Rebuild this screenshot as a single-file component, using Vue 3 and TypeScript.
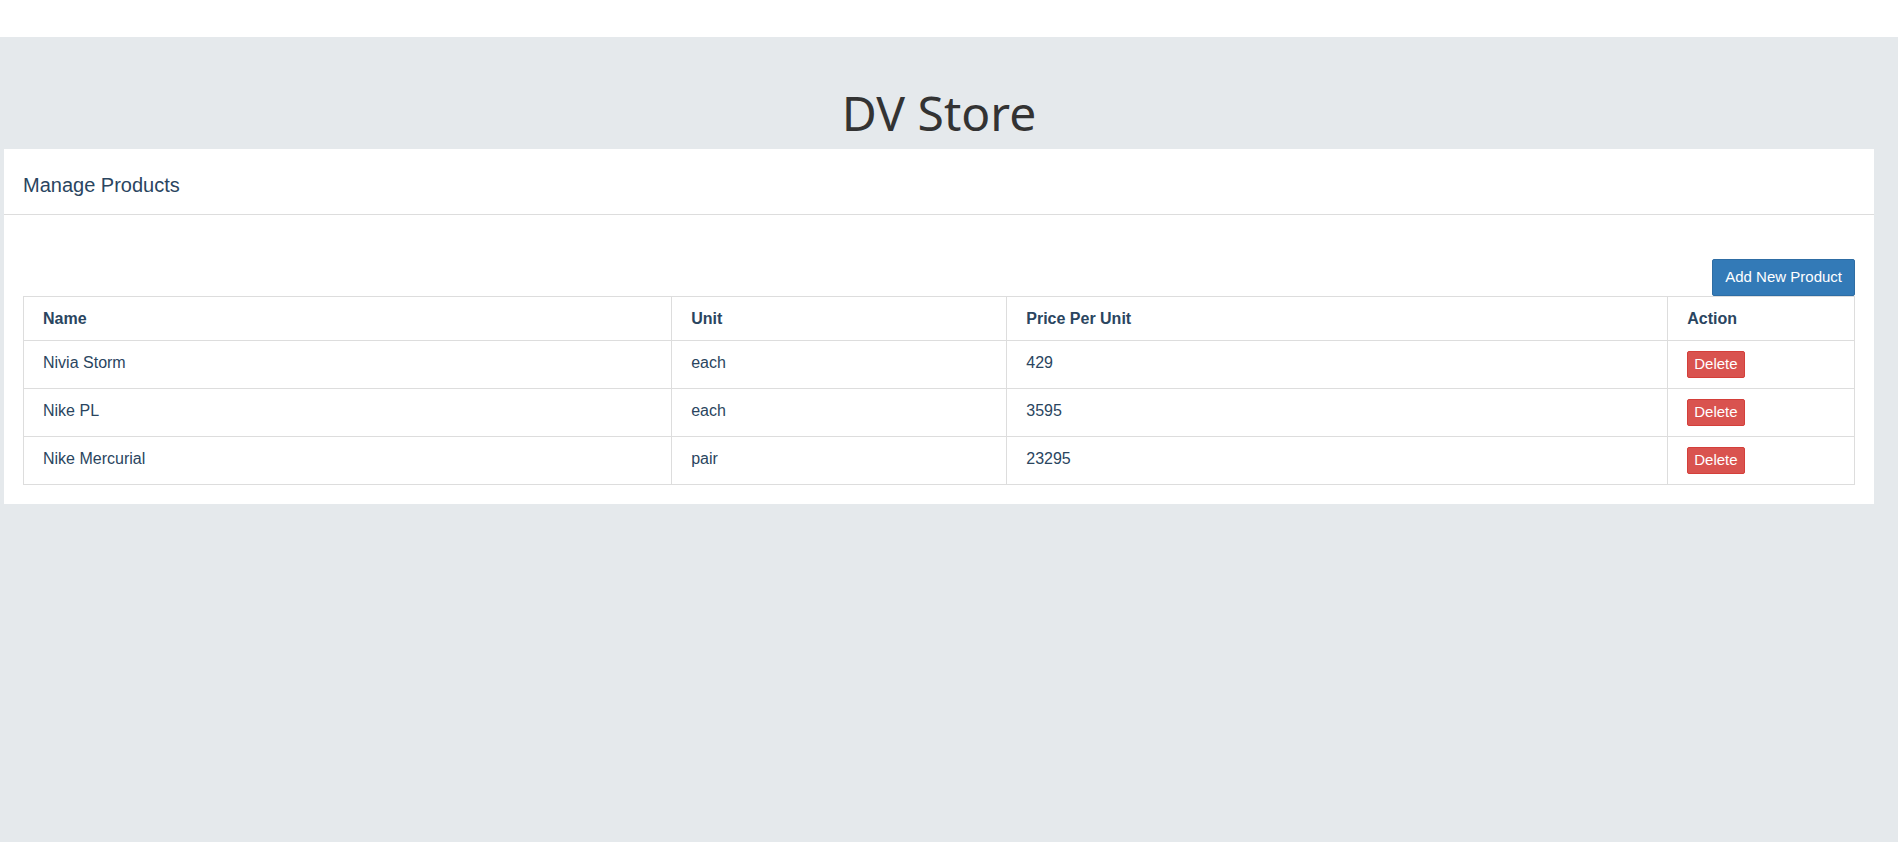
<script setup lang="ts">
import { ref } from 'vue'

interface Product {
  id: number
  name: string
  unit: string
  price: number
}

const products = ref<Product[]>([
  { id: 1, name: 'Nivia Storm', unit: 'each', price: 429 },
  { id: 2, name: 'Nike PL', unit: 'each', price: 3595 },
  { id: 3, name: 'Nike Mercurial', unit: 'pair', price: 23295 },
])

function removeProduct(id: number): void {
  products.value = products.value.filter((product) => product.id !== id)
}
</script>

<template>
  <div class="page">
    <header class="topbar"></header>
    <main class="content">
      <h1 class="title">DV Store</h1>
      <section class="panel" aria-labelledby="panel-title">
        <div class="panel-header">
          <h2 id="panel-title" class="panel-title">Manage Products</h2>
        </div>
        <div class="panel-body">
          <div class="actions">
            <button type="button" class="btn btn-primary">Add New Product</button>
          </div>
          <table class="products">
            <colgroup>
              <col class="col-name" />
              <col class="col-unit" />
              <col class="col-price" />
              <col />
            </colgroup>
            <thead>
              <tr>
                <th scope="col">Name</th>
                <th scope="col">Unit</th>
                <th scope="col">Price Per Unit</th>
                <th scope="col">Action</th>
              </tr>
            </thead>
            <tbody>
              <tr v-for="product in products" :key="product.id">
                <td>{{ product.name }}</td>
                <td>{{ product.unit }}</td>
                <td>{{ product.price }}</td>
                <td>
                  <button type="button" class="btn btn-danger" @click="removeProduct(product.id)">Delete</button>
                </td>
              </tr>
            </tbody>
          </table>
        </div>
      </section>
    </main>
  </div>
</template>

<style>
body {
  margin: 0;
  background: #e5e9ec;
}
</style>

<style scoped>
.page {
  min-height: 100vh;
  background: #e5e9ec;
  color: #2a4560;
  font-family: Arial, "Liberation Sans", sans-serif;
  font-size: 16px;
  line-height: 24px;
}

.topbar {
  height: 37px;
  background: #fff;
}

.content {
  padding: 50px 24px 20px 4px;
}

.title {
  margin: 0 0 10px;
  color: #333;
  font-family: "Comic Sans MS", "Noto Sans", sans-serif;
  font-size: 48px;
  font-weight: 400;
  line-height: 52px;
  text-align: center;
}

.panel {
  background: #fff;
}

.panel-header {
  padding: 24px 19px 17px;
  border-bottom: 1px solid #ddd;
}

.panel-title {
  margin: 0;
  font-size: 20px;
  font-weight: 400;
  line-height: 24px;
}

.panel-body {
  padding: 44px 19px 19px;
}

.actions {
  display: flex;
  justify-content: flex-end;
}

.btn {
  display: block;
  border: 1px solid;
  border-radius: 2px;
  color: #fff;
  font-family: inherit;
  font-size: 15px;
  line-height: 23px;
  cursor: pointer;
}

.btn-primary {
  padding: 5px 12px 7px;
  border-color: #2e6da4;
  background: #337ab7;
}

.btn-danger {
  padding: 0 6px 2px;
  border-color: #d43f3a;
  background: #d9534f;
}

.products {
  width: 100%;
  table-layout: fixed;
  border-collapse: collapse;
}

.col-name {
  width: 35.4%;
}

.col-unit {
  width: 18.3%;
}

.col-price {
  width: 36.1%;
}

th,
td {
  padding: 10px 19px;
  border: 1px solid #ddd;
  text-align: left;
  vertical-align: top;
}

th {
  line-height: 23px;
}
</style>
